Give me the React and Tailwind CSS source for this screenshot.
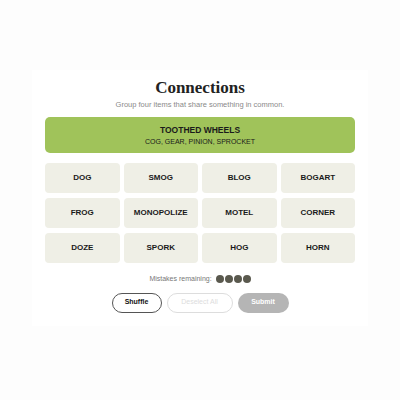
import React from 'react';

const SOLVED = { title: 'TOOTHED WHEELS', items: 'COG, GEAR, PINION, SPROCKET' };

const WORDS = [
  'DOG', 'SMOG', 'BLOG', 'BOGART',
  'FROG', 'MONOPOLIZE', 'MOTEL', 'CORNER',
  'DOZE', 'SPORK', 'HOG', 'HORN',
];

export default function App() {
  return (
    <div className="w-[400px] h-[400px] bg-[#fdfdfd] pt-[70px] font-['Liberation_Sans',sans-serif]">
      <div className="mx-[32px] bg-white pt-[8px] pb-[13px] px-[13px] flex flex-col items-center">
        {/* Header */}
        <h1 className="text-[17px] leading-[20px] font-bold text-[#222] font-['Liberation_Serif',serif]">Connections</h1>
        <p className="mt-[2px] text-[7.5px] leading-[9px] text-[#8a8a8a]">Group four items that share something in common.</p>

        {/* Solved group */}
        <div className="mt-[8px] w-full h-[36px] rounded-[5px] bg-[#a0c35a] flex flex-col items-center justify-center">
          <p className="text-[8.5px] leading-[10px] font-bold text-[#1a1a1a]">{SOLVED.title}</p>
          <p className="mt-[2px] text-[7px] leading-[9px] text-[#1a1a1a]">{SOLVED.items}</p>
        </div>

        {/* Word tiles */}
        <div className="mt-[10px] w-full grid grid-cols-4 gap-x-[4px] gap-y-[5px]">
          {WORDS.map((w) => (
            <div key={w} className="h-[30px] rounded-[4px] bg-[#efefe6] flex items-center justify-center text-[8px] font-bold text-[#1a1a1a]">
              {w}
            </div>
          ))}
        </div>

        {/* Mistakes */}
        <div className="mt-[11px] flex items-center gap-[4px]">
          <span className="text-[7px] text-[#777]">Mistakes remaining:</span>
          <div className="flex gap-[1px]">
            {[0, 1, 2, 3].map((i) => (
              <span key={i} className="w-[8px] h-[8px] rounded-full bg-[#5a594e]" />
            ))}
          </div>
        </div>

        {/* Actions */}
        <div className="mt-[8px] flex gap-[5px]">
          <button type="button" className="w-[50px] h-[20px] rounded-full border border-[#555] text-[7px] font-bold text-[#111]">Shuffle</button>
          <button type="button" className="w-[66px] h-[20px] rounded-full border border-[#ddd] text-[7px] text-[#ddd]">Deselect All</button>
          <button type="button" className="w-[51px] h-[20px] rounded-full bg-[#b5b5b5] text-[7px] font-bold text-white">Submit</button>
        </div>
      </div>
    </div>
  );
}
